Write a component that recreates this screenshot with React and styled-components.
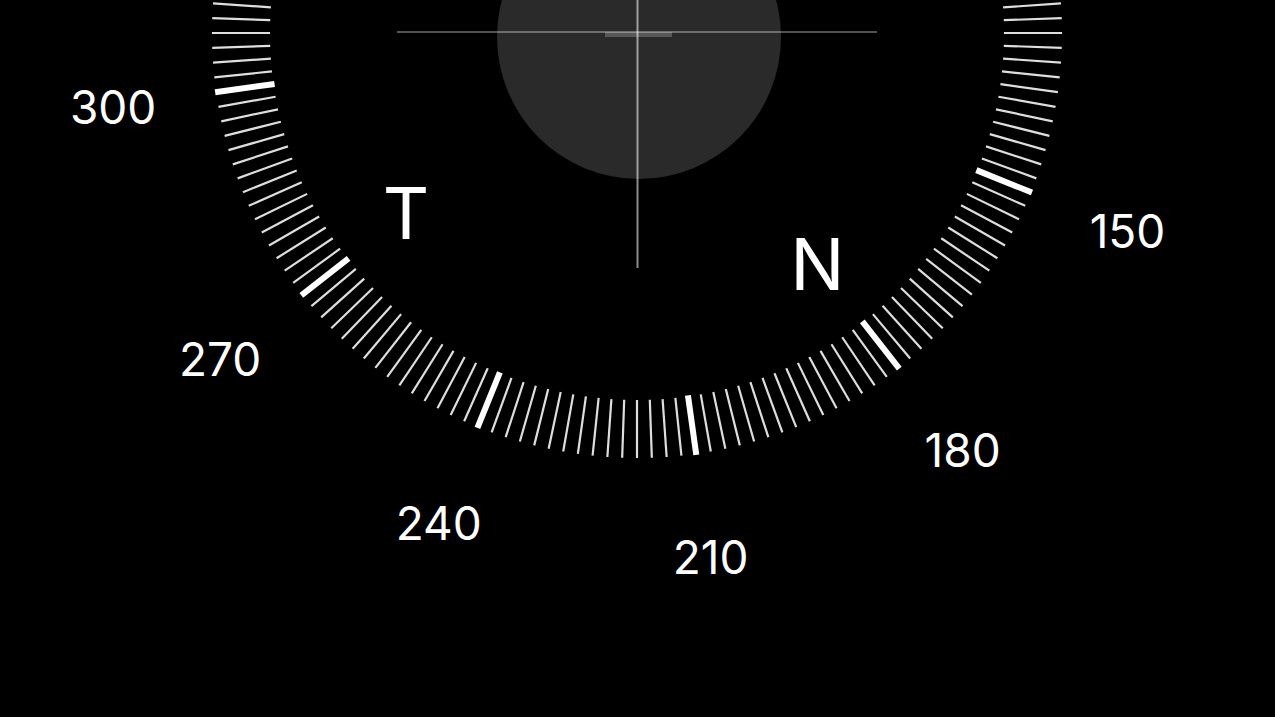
import React from 'react';
import styled, { createGlobalStyle } from 'styled-components';

const GlobalStyle = createGlobalStyle`
  html, body {
    margin: 0;
    padding: 0;
    background: #000;
  }
  body {
    font-family: 'Inter', 'Noto Sans', sans-serif;
  }
`;

const CX = 637;
const CY = 33;
const HEADING = 38;

const polar = (deg, r) => {
  const a = ((deg - HEADING) * Math.PI) / 180;
  return [CX + r * Math.sin(a), CY - r * Math.cos(a)];
};

const Screen = styled.div`
  width: 1275px;
  height: 717px;
  overflow: hidden;
  background: #000;
  display: flex;
`;

const Dial = styled.svg`
  display: block;
  width: 1275px;
  height: 717px;
`;

const Tick = styled.line`
  stroke: ${(p) => (p.$major ? '#ffffff' : '#dedede')};
  stroke-width: ${(p) => (p.$major ? 6 : 2.2)};
`;

const Bubble = styled.circle`
  fill: #2a2a2a;
`;

const CrossLine = styled.line`
  stroke: ${(p) => (p.$strong ? 'rgba(255,255,255,0.55)' : 'rgba(255,255,255,0.32)')};
  stroke-width: 2;
`;

const LevelBar = styled.rect`
  fill: rgba(255, 255, 255, 0.22);
`;

const Degree = styled.text`
  fill: #fff;
  font-family: 'Inter', 'Noto Sans', sans-serif;
  font-size: 46px;
  font-weight: 400;
  text-anchor: middle;
`;

const Cardinal = styled.text`
  fill: #fff;
  font-family: 'Inter', 'Noto Sans', sans-serif;
  font-size: 72px;
  font-weight: 400;
  text-anchor: middle;
`;

const ticks = Array.from({ length: 180 }, (_, i) => i * 2);
// only the labels that fall inside the visible part of the dial
const degrees = [150, 180, 210, 240, 270, 300];
const cardinals = [
  { deg: 180, text: 'N' },
  { deg: 270, text: 'T' },
];

export default function App() {
  return (
    <>
      <GlobalStyle />
      <Screen>
        <Dial viewBox="0 0 1275 717">
          <Bubble cx={639} cy={37} r={142} />

          {ticks.map((d) => {
            const major = d % 30 === 0;
            const [x1, y1] = polar(d, major ? 366 : 367);
            const [x2, y2] = polar(d, major ? 426 : 425);
            return <Tick key={d} $major={major} x1={x1} y1={y1} x2={x2} y2={y2} />;
          })}

          <CrossLine x1={397} y1={32} x2={877} y2={32} />
          <LevelBar x={605} y={32} width={67} height={5} />
          <CrossLine $strong x1={637.5} y1={0} x2={637.5} y2={268} />

          {degrees.map((d) => {
            const [x, y] = polar(d, 529);
            return (
              <Degree key={d} x={x} y={y + 17}>
                {d}
              </Degree>
            );
          })}

          {cardinals.map((c) => {
            const [x, y] = polar(c.deg, 293);
            return (
              <Cardinal key={c.text} x={x} y={y + 26}>
                {c.text}
              </Cardinal>
            );
          })}
        </Dial>
      </Screen>
    </>
  );
}
